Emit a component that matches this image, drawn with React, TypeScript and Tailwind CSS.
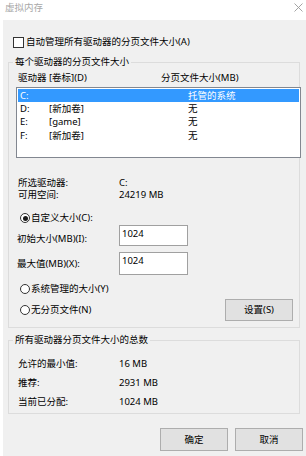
import React from "react";

function Radio({ checked }: { checked?: boolean }) {
  return (
    <span className="w-[10px] h-[10px] rounded-full border border-[#333333] bg-white flex items-center justify-center shrink-0">
      {checked && <span className="w-[5px] h-[5px] rounded-full bg-[#1a1a1a]" />}
    </span>
  );
}

export default function App() {
  const rows = [
    { d: "C:", l: "", s: "托管的系统", sel: true },
    { d: "D:", l: "[新加卷]", s: "无" },
    { d: "E:", l: "[game]", s: "无" },
    { d: "F:", l: "[新加卷]", s: "无" },
  ];
  return (
    <div className="w-[306px] h-[456px] bg-white font-['Noto_Sans','Noto_Sans_CJK_SC',sans-serif] text-[9.5px] leading-[12px] text-black flex flex-col overflow-hidden">
      <div className="h-[20px] shrink-0 flex items-start justify-between">
        <span className="ml-[5px] mt-[2px] text-[#a8a8a8]">虚拟内存</span>
        <svg className="mt-[3px] mr-[3px]" width="9" height="9" viewBox="0 0 9 9">
          <path d="M0.5 0.5 L8.5 8.5 M8.5 0.5 L0.5 8.5" stroke="#9a9a9a" strokeWidth="0.9" fill="none" />
        </svg>
      </div>
      <div className="ml-[3px] flex-1 bg-[#f0f0f0] flex flex-col pt-[16px]">
        <div className="h-[12px] flex items-center pl-[10px] gap-[2px]">
          <span className="w-[11px] h-[11px] border border-[#333333] bg-white shrink-0" />
          <span>自动管理所有驱动器的分页文件大小(A)</span>
        </div>

        <fieldset className="ml-[5px] mr-[6px] mt-[8px] border border-[#dcdcdc] pb-[6px] min-w-0">
          <legend className="ml-[4px] px-[2px] leading-[12px]">每个驱动器的分页文件大小</legend>
          <div className="mt-[4px] h-[12px] flex pl-[9px]">
            <span className="w-[143px]">驱动器 [卷标](D)</span>
            <span>分页文件大小(MB)</span>
          </div>
          <div className="mt-[3px] ml-[7px] w-[285px] h-[71px] border border-[#828790] bg-white pt-[1px] flex flex-col">
            {rows.map((r) => (
              <div
                key={r.d}
                className={
                  r.sel
                    ? "h-[13.3px] mx-[1px] flex items-center pl-[2px] bg-[#3399ff] text-white"
                    : "h-[13.3px] mx-[1px] flex items-center pl-[2px]"
                }
              >
                <span className="w-[29px]">{r.d}</span>
                <span className="w-[139px]">{r.l}</span>
                <span>{r.s}</span>
              </div>
            ))}
          </div>

          <div className="mt-[19px] h-[12px] flex pl-[9px]">
            <span className="w-[101px]">所选驱动器:</span>
            <span>C:</span>
          </div>
          <div className="h-[12px] flex pl-[9px]">
            <span className="w-[101px]">可用空间:</span>
            <span>24219 MB</span>
          </div>

          <div className="mt-[11px] h-[12px] flex items-center pl-[11px] gap-[1px]">
            <Radio checked />
            <span>自定义大小(C):</span>
          </div>

          <div className="mt-[1px] flex pl-[8px]">
            <span className="w-[102px] mt-[8px]">初始大小(MB)(I):</span>
            <div className="w-[69px] h-[21px] border border-[#a0a0a0] bg-white pl-[2px] pt-[2px]">1024</div>
          </div>
          <div className="mt-[6px] flex pl-[8px]">
            <span className="w-[102px] mt-[6px]">最大值(MB)(X):</span>
            <div className="w-[69px] h-[23px] border border-[#a0a0a0] bg-white pl-[2px] pt-[2px]">1024</div>
          </div>

          <div className="mt-[8px] h-[12px] flex items-center pl-[11px] gap-[1px]">
            <Radio />
            <span>系统管理的大小(Y)</span>
          </div>

          <div className="mt-[3px] h-[23px] flex items-center pl-[11px] pr-[6px]">
            <Radio />
            <span className="ml-[1px]">无分页文件(N)</span>
            <div className="ml-auto w-[68px] h-[22px] border border-[#adadad] bg-[#e1e1e1] flex items-center justify-center">
              设置(S)
            </div>
          </div>
        </fieldset>

        <fieldset className="ml-[5px] mr-[6px] mt-[6px] border border-[#dcdcdc] pb-[5px] min-w-0">
          <legend className="ml-[4px] px-[2px] leading-[12px]">所有驱动器分页文件大小的总数</legend>
          <div className="mt-[12px] flex flex-col gap-[7px] pl-[9px]">
            <div className="h-[12px] flex">
              <span className="w-[101px]">允许的最小值:</span>
              <span>16 MB</span>
            </div>
            <div className="h-[12px] flex">
              <span className="w-[101px]">推荐:</span>
              <span>2931 MB</span>
            </div>
            <div className="h-[12px] flex">
              <span className="w-[101px]">当前已分配:</span>
              <span>1024 MB</span>
            </div>
          </div>
        </fieldset>

        <div className="mt-[14px] flex justify-end gap-[7px] pr-[3px]">
          <div className="w-[68px] h-[23px] border border-[#adadad] bg-[#e1e1e1] flex items-center justify-center">确定</div>
          <div className="w-[68px] h-[23px] border border-[#adadad] bg-[#e1e1e1] flex items-center justify-center">取消</div>
        </div>
      </div>
    </div>
  );
}
